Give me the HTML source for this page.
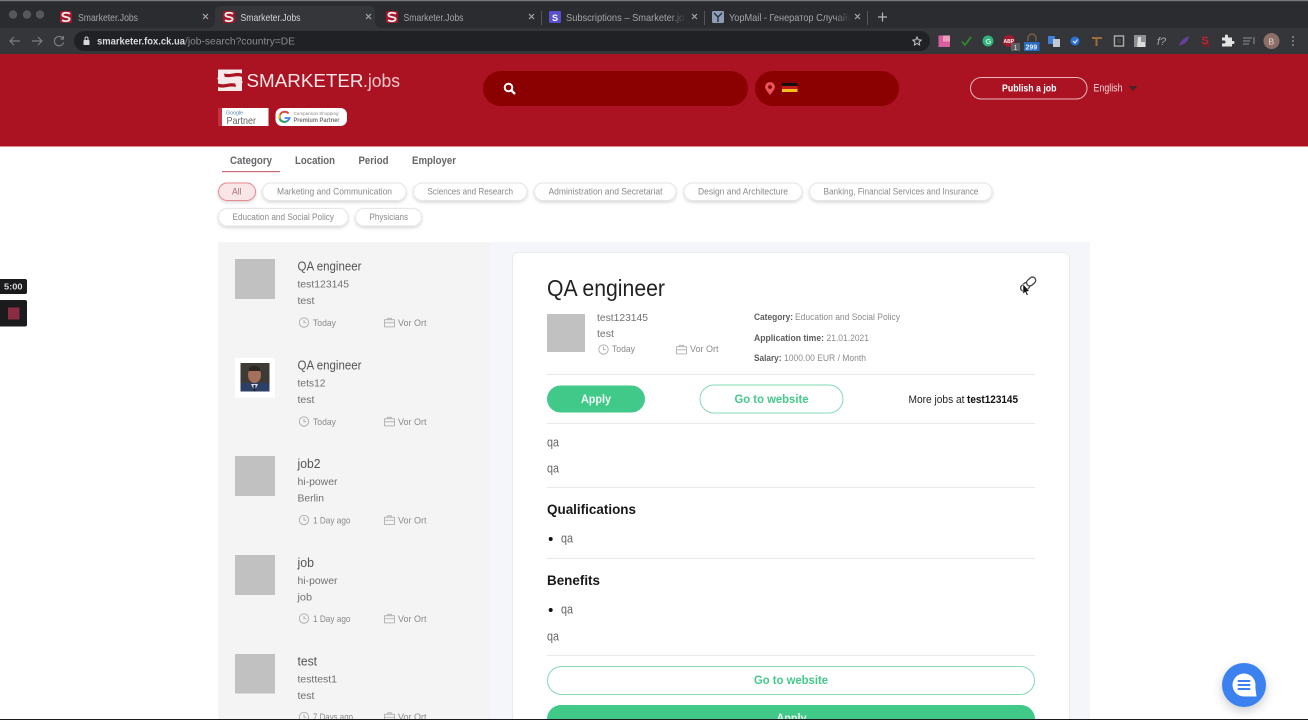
<!DOCTYPE html>
<html><head><meta charset="utf-8"><title>Smarketer.Jobs</title>
<style>
html,body{margin:0;padding:0;width:1308px;height:720px;overflow:hidden;background:#fff}
svg{display:block;filter:blur(.35px)}
text{font-family:"Liberation Sans",Arial,sans-serif;white-space:pre}
.tab{font-size:10.5px;fill:#a3a5a9}
.tabA{font-size:10.5px;fill:#d5d6d8}
.x{stroke:#a9abae;stroke-width:1.1;fill:none}
.chip{fill:#fff;stroke:#e6e6e6;stroke-width:1;filter:url(#cs)}
.ct{font-size:9.5px;fill:#8a8a8a}
.nav{font-size:11px;font-weight:bold;fill:#66666a}
.t1{font-size:12.5px;fill:#555}
.t2{font-size:10.5px;fill:#707070}
.m{font-size:9.5px;fill:#8a8a8a}
.hr{stroke:#e9e9e9;stroke-width:1}
.b{font-size:9.5px;font-weight:bold;fill:#5c5c5c}
.n{font-size:9.5px;fill:#8c8c8c}
.p{font-size:12.5px;fill:#666}
.h{font-size:14px;font-weight:bold;fill:#181818}
.g{font-size:12px;font-weight:bold;fill:#45c98b}
.ic{fill:none;stroke:#aaa;stroke-width:.9}
</style></head><body>
<svg width="1308" height="720" viewBox="0 0 1308 720" xmlns="http://www.w3.org/2000/svg">
<defs>
<filter id="cs" x="-10%" y="-30%" width="120%" height="180%"><feDropShadow dx="0" dy="1.5" stdDeviation="1.5" flood-color="#000" flood-opacity=".16"/></filter>
<filter id="ss" x="-40%" y="-40%" width="180%" height="180%"><feDropShadow dx="0" dy="4" stdDeviation="5" flood-color="#000" flood-opacity=".2"/></filter>
<linearGradient id="fd" x1="0" x2="1"><stop offset="0" stop-color="#2b2c2f" stop-opacity="0"/><stop offset="1" stop-color="#2b2c2f"/></linearGradient>
<symbol id="fav" viewBox="0 0 14 14" overflow="visible"><rect x="1" y="1" width="12" height="12" rx="2" fill="#a5162a"/><path d="M11 3.800C8 2 3.400 2.600 3.400 5 3.400 7.400 10.600 6.600 10.600 9 10.600 11.300 6 12 3 10.200" fill="none" stroke="#f4eeee" stroke-width="1.800"/></symbol>
<symbol id="clock" viewBox="0 0 11 11"><circle cx="5.500" cy="5.500" r="4.700" class="ic"/><path d="M5.500 2.800V5.700H7.800" class="ic"/></symbol>
<symbol id="brief" viewBox="0 0 12 11"><rect x=".6" y="2.500" width="10.800" height="7.800" class="ic"/><path d="M4 2.500V.9H8V2.500M.6 5.800H11.400" class="ic"/></symbol>
</defs>

<!-- browser chrome -->
<rect width="1308" height="54" fill="#2b2c2f"/>
<rect width="1308" height="1.200" fill="#77787a"/>
<rect x="0" y="28" width="1308" height="26" fill="#35363a"/>
<path d="M208 28Q215 28 215 21V12Q215 6 221 6H369Q375 6 375 12V21Q375 28 382 28Z" fill="#35363a"/>
<circle cx="13" cy="14.500" r="4.200" fill="#56575a"/><circle cx="27" cy="14.500" r="4.200" fill="#56575a"/><circle cx="40" cy="14.500" r="4.200" fill="#56575a"/>
<use href="#fav" x="59" y="10" width="14" height="14"/>
<text class="tab" x="78" y="21" textLength="60" lengthAdjust="spacingAndGlyphs">Smarketer.Jobs</text>
<path class="x" d="M203 14 208 19M208 14 203 19"/>
<use href="#fav" x="222" y="10" width="14" height="14"/>
<text class="tabA" x="240.500" y="21" textLength="60" lengthAdjust="spacingAndGlyphs">Smarketer.Jobs</text>
<path class="x" d="M366 14 371 19M371 14 366 19"/>
<use href="#fav" x="385" y="10" width="14" height="14"/>
<text class="tab" x="403.500" y="21" textLength="60" lengthAdjust="spacingAndGlyphs">Smarketer.Jobs</text>
<path class="x" d="M529 14 534 19M534 14 529 19"/>
<rect x="541" y="11" width="1" height="14" fill="#55565a"/>
<rect x="549" y="11" width="12" height="12" rx="1.500" fill="#5a4fcf"/><text x="552" y="21" font-size="9" font-weight="bold" fill="#fff">S</text>
<text class="tab" x="566" y="21" textLength="128" lengthAdjust="spacingAndGlyphs">Subscriptions – Smarketer.jobs</text>
<rect x="670" y="9" width="16" height="16" fill="url(#fd)"/><rect x="686" y="9" width="10" height="16" fill="#2b2c2f"/>
<path class="x" d="M692 14 697 19M697 14 692 19"/>
<rect x="704" y="11" width="1" height="14" fill="#55565a"/>
<rect x="712" y="11" width="12" height="12" rx="1.500" fill="#8f9db5"/><path d="M714 13 718 17 722 13M718 17V22" stroke="#22304a" stroke-width="1.400" fill="none"/>
<text class="tab" x="729" y="21" textLength="135" lengthAdjust="spacingAndGlyphs">YopMail - Генератор Случайных</text>
<rect x="834" y="9" width="16" height="16" fill="url(#fd)"/><rect x="850" y="9" width="16" height="16" fill="#2b2c2f"/>
<path class="x" d="M855 14 860 19M860 14 855 19"/>
<rect x="867" y="11" width="1" height="14" fill="#55565a"/>
<path d="M882.500 12.500V21.500M878 17H887" stroke="#b4b5b7" stroke-width="1.200"/>

<path d="M20 41H10M14 37 10 41 14 45" fill="none" stroke="#7d7e81" stroke-width="1.200"/>
<path d="M32 41H42M38 37 42 41 38 45" fill="none" stroke="#7d7e81" stroke-width="1.200"/>
<path d="M63 38.500A4.700 4.700 0 1 0 63.600 42.500M63.400 36V39H60.400" fill="none" stroke="#7d7e81" stroke-width="1.200"/>
<rect x="74" y="31" width="856" height="20" rx="10" fill="#202124"/>
<rect x="83.500" y="40" width="6" height="5" rx=".8" fill="#d8d8d8"/><path d="M85 40V38.500A1.500 1.500 0 0 1 88 38.500V40" fill="none" stroke="#d8d8d8"/>
<text x="97" y="44.500" font-size="10.500" font-weight="bold" fill="#d9dadb" textLength="88" lengthAdjust="spacingAndGlyphs">smarketer.fox.ck.ua</text>
<text x="185" y="44.500" font-size="10.500" fill="#8a8b8e" textLength="110" lengthAdjust="spacingAndGlyphs">/job-search?country=DE</text>
<path d="M917 37 918.200 39.800 921.200 40.100 919 42.100 919.600 45 917 43.500 914.400 45 915 42.100 912.800 40.100 915.800 39.800Z" fill="none" stroke="#c4c4c4" stroke-width="1"/>

<!-- extensions -->
<rect x="938.500" y="35.500" width="11.500" height="11.500" fill="#d9609e"/><rect x="943" y="35.500" width="7" height="6" fill="#ee9cc0"/>
<path d="M962 41.500 965 45 971 37" fill="none" stroke="#2f7f2b" stroke-width="2"/>
<circle cx="988" cy="41" r="5.500" fill="#2fb27c"/><text x="985.500" y="44" font-size="7.500" font-weight="bold" fill="#c9f0df">G</text>
<circle cx="1009" cy="41" r="6" fill="#a4192d"/><text x="1003.500" y="43" font-size="5" font-weight="bold" fill="#fff">ABP</text>
<rect x="1011" y="43" width="9" height="8" fill="#5e5f62"/><text x="1013.500" y="50" font-size="7" fill="#ddd">1</text>
<path d="M1028 41V38A4 4 0 0 1 1036 38V41" fill="none" stroke="#7a5c40" stroke-width="1.500"/>
<rect x="1024" y="42" width="15.500" height="9" fill="#2a6cc4"/><text x="1025.500" y="49.500" font-size="7" font-weight="bold" fill="#e5effa">299</text>
<rect x="1048" y="36" width="7" height="8" fill="#3f7fd8"/><rect x="1053" y="39" width="7" height="8" fill="#c5cad2"/>
<circle cx="1075" cy="41" r="4.500" fill="#2a72d8"/><path d="M1073 41 1075 43 1077.500 39.500" stroke="#fff" fill="none"/>
<path d="M1092 38H1102M1096.500 38V46" fill="none" stroke="#a06c38" stroke-width="2"/>
<rect x="1114.500" y="36" width="9" height="10" fill="#2a2a2c" stroke="#a8a8a8" stroke-width="1.500"/><rect x="1116.800" y="38.300" width="4.400" height="5.400" fill="#444"/>
<rect x="1134" y="35" width="12" height="12" fill="#8f9093"/><path d="M1138 37H1141V42H1145V47H1137Z" fill="#dcdcdd"/>
<text x="1157" y="45" font-size="11" font-style="italic" font-family="Liberation Serif" fill="#a8a8a8">f?</text>
<path d="M1179 46Q1181 39 1189 36 1188 43 1181 45Z" fill="#6a3f9c"/>
<text x="1201.500" y="44" font-size="11" font-weight="bold" fill="#c8202f">S</text><rect x="1203" y="44" width="7" height="3" fill="#6b2229"/>
<path d="M1222 38H1225V36.500A1.500 1.500 0 0 1 1228 36.500V38H1232V41.500H1233A1.500 1.500 0 0 1 1233 44.500H1232V47H1222V44H1224A1.500 1.500 0 0 0 1224 41H1222Z" fill="#e3e3e3" transform="translate(0,-.5)"/>
<path d="M1243 38H1252M1243 41H1250M1243 44H1249M1254 37V44" stroke="#7f8083" stroke-width="1.200" fill="none"/>
<circle cx="1271.500" cy="41" r="8" fill="#8e6f68"/><text x="1268.500" y="44.500" font-size="8.500" fill="#e6d9d5">B</text>
<circle cx="1293" cy="37" r="1" fill="#8f9092"/><circle cx="1293" cy="41" r="1" fill="#8f9092"/><circle cx="1293" cy="45" r="1" fill="#8f9092"/>

<!-- red header -->
<rect y="54" width="1308" height="92.500" fill="#ab1323"/>
<rect y="146" width="1308" height="1" fill="#d98a92"/>
<rect x="218" y="69.500" width="24" height="21.500" fill="#f6e9e9"/>
<path d="M242.500 75.500C236 72.500 231 77.500 224 75" fill="none" stroke="#ab1323" stroke-width="3.200"/>
<path d="M217.500 85C224 88 229 83 236 85.500" fill="none" stroke="#ab1323" stroke-width="3.200"/>
<path d="M218 79.500 224 75M242 81 236 85.500" stroke="#f6e9e9" stroke-width="3"/>
<text x="246.500" y="87" font-size="18.500" fill="#f6e8e9" textLength="117" lengthAdjust="spacingAndGlyphs">SMARKETER</text>
<text x="363" y="87" font-size="18.500" fill="#eec8cc" textLength="37" lengthAdjust="spacingAndGlyphs">.jobs</text>
<rect x="218" y="108" width="50.500" height="18" fill="#fff"/><rect x="218" y="108" width="4" height="18" fill="#c8303f"/>
<text x="226" y="114.500" font-size="5.500" fill="#5a7fc0" textLength="17" lengthAdjust="spacingAndGlyphs">Google</text>
<text x="226.500" y="124" font-size="10.500" fill="#666" textLength="29.500" lengthAdjust="spacingAndGlyphs">Partner</text>
<rect x="275.500" y="108" width="71.500" height="18" rx="6.500" fill="#fff"/>
<path d="M288.500 113.500A5 5 0 1 0 289.500 118H284.500" fill="none" stroke="#4285f4" stroke-width="1.800"/>
<path d="M280.200 114.500A5 5 0 0 1 288.500 113.500" fill="none" stroke="#ea4335" stroke-width="1.800"/>
<path d="M279.500 118.500A5 5 0 0 0 287 121.300" fill="none" stroke="#34a853" stroke-width="1.800"/>
<path d="M279.800 114.500A5 5 0 0 0 279.500 118.500" fill="none" stroke="#fbbc05" stroke-width="1.800"/>
<text x="293.500" y="115" font-size="4.500" fill="#888" textLength="45" lengthAdjust="spacingAndGlyphs">Comparison Shopping</text>
<text x="293.500" y="122" font-size="6" font-weight="bold" fill="#777" textLength="46" lengthAdjust="spacingAndGlyphs">Premium Partner</text>

<rect x="483" y="71" width="265" height="35" rx="17.500" fill="#8b0000"/>
<circle cx="508.500" cy="87.500" r="3.800" fill="none" stroke="#fff" stroke-width="2"/><path d="M511.500 90.500 515 94" stroke="#fff" stroke-width="2.300"/>
<rect x="755" y="71" width="144" height="35" rx="17.500" fill="#8b0000"/>
<path d="M770 95Q765 89 765 87A5 5 0 0 1 775 87Q775 89 770 95Z" fill="#e8545a"/><circle cx="770" cy="87" r="1.900" fill="#8b0000"/>
<rect x="782" y="83" width="15.500" height="3" fill="#111"/><rect x="782" y="86" width="15.500" height="3" fill="#c41a1a"/><rect x="782" y="89" width="15.500" height="3" fill="#f2c11d"/>
<rect x="970.500" y="77.500" width="116.500" height="21.500" rx="10.700" fill="none" stroke="#e9b8bc" stroke-width="1"/>
<text x="1002" y="91.500" font-size="10.500" font-weight="bold" fill="#fff" textLength="54.500" lengthAdjust="spacingAndGlyphs">Publish a job</text>
<text x="1093.500" y="91.500" font-size="11" fill="#edd5d7" textLength="29" lengthAdjust="spacingAndGlyphs">English</text>
<path d="M1128.500 86H1137.500L1133 91Z" fill="#4a2226"/>

<!-- filter tabs -->
<text class="nav" x="230" y="164" textLength="42" lengthAdjust="spacingAndGlyphs">Category</text>
<text class="nav" x="295" y="164" textLength="40" lengthAdjust="spacingAndGlyphs">Location</text>
<text class="nav" x="358.500" y="164" textLength="30" lengthAdjust="spacingAndGlyphs">Period</text>
<text class="nav" x="412" y="164" textLength="44" lengthAdjust="spacingAndGlyphs">Employer</text>
<rect x="222" y="171" width="58" height="1.200" fill="#c76a77"/>

<!-- chips -->
<rect x="218.500" y="183" width="37" height="17.500" rx="8.700" fill="#fbe6e7" stroke="#e98791" filter="url(#cs)"/>
<text x="232" y="194.500" font-size="9.500" fill="#9b7074" textLength="9.500" lengthAdjust="spacingAndGlyphs">All</text>
<rect class="chip" x="262.500" y="183" width="143.500" height="17.500" rx="8.700"/><text class="ct" x="277" y="194.500" textLength="115" lengthAdjust="spacingAndGlyphs">Marketing and Communication</text>
<rect class="chip" x="413.500" y="183" width="113.500" height="17.500" rx="8.700"/><text class="ct" x="427.500" y="194.500" textLength="85.500" lengthAdjust="spacingAndGlyphs">Sciences and Research</text>
<rect class="chip" x="534.500" y="183" width="141.500" height="17.500" rx="8.700"/><text class="ct" x="548.500" y="194.500" textLength="114" lengthAdjust="spacingAndGlyphs">Administration and Secretariat</text>
<rect class="chip" x="684" y="183" width="118" height="17.500" rx="8.700"/><text class="ct" x="698" y="194.500" textLength="90" lengthAdjust="spacingAndGlyphs">Design and Architecture</text>
<rect class="chip" x="809.500" y="183" width="182.500" height="17.500" rx="8.700"/><text class="ct" x="823.500" y="194.500" textLength="155" lengthAdjust="spacingAndGlyphs">Banking, Financial Services and Insurance</text>
<rect class="chip" x="218.500" y="208.500" width="129.500" height="17.500" rx="8.700"/><text class="ct" x="232.500" y="220" textLength="101.500" lengthAdjust="spacingAndGlyphs">Education and Social Policy</text>
<rect class="chip" x="355.500" y="208.500" width="66" height="17.500" rx="8.700"/><text class="ct" x="369.500" y="220" textLength="38.500" lengthAdjust="spacingAndGlyphs">Physicians</text>

<!-- panel -->
<rect x="218" y="242" width="872" height="478" fill="#f5f6fa"/>
<rect x="218" y="242" width="272" height="478" fill="#f4f4f5"/>

<!-- job list -->
<rect x="235" y="259" width="40" height="40" fill="#c1c1c1"/>
<text class="t1" x="297.500" y="270.500" textLength="64" lengthAdjust="spacingAndGlyphs">QA engineer</text>
<text class="t2" x="297.500" y="287.500" textLength="51.500" lengthAdjust="spacingAndGlyphs">test123145</text>
<text class="t2" x="297.500" y="304" textLength="17" lengthAdjust="spacingAndGlyphs">test</text>
<use href="#clock" x="298.500" y="317" width="11" height="11"/><text class="m" x="313" y="326" textLength="23" lengthAdjust="spacingAndGlyphs">Today</text>
<use href="#brief" x="384" y="317" width="11" height="11"/><text class="m" x="398" y="326" textLength="28.500" lengthAdjust="spacingAndGlyphs">Vor Ort</text>

<rect x="235" y="358" width="40" height="39.500" fill="#fff"/>
<rect x="240.500" y="363" width="29" height="28.500" fill="#3e3a36"/><rect x="240.500" y="383" width="29" height="8.500" fill="#2c3f66"/>
<ellipse cx="254.500" cy="375" rx="6.500" ry="8" fill="#a3705c"/><path d="M249 368Q254.500 363 260 368V371H249Z" fill="#2c2623"/><path d="M251 384H258L254.500 391Z" fill="#d8dde6"/><rect x="253.500" y="385" width="2" height="6.500" fill="#1c2438"/>
<text class="t1" x="297.500" y="369.500" textLength="64" lengthAdjust="spacingAndGlyphs">QA engineer</text>
<text class="t2" x="297.500" y="386.500" textLength="28" lengthAdjust="spacingAndGlyphs">tets12</text>
<text class="t2" x="297.500" y="403" textLength="17" lengthAdjust="spacingAndGlyphs">test</text>
<use href="#clock" x="298.500" y="416" width="11" height="11"/><text class="m" x="313" y="425" textLength="23" lengthAdjust="spacingAndGlyphs">Today</text>
<use href="#brief" x="384" y="416" width="11" height="11"/><text class="m" x="398" y="425" textLength="28.500" lengthAdjust="spacingAndGlyphs">Vor Ort</text>

<rect x="235" y="456" width="40" height="40" fill="#c1c1c1"/>
<text class="t1" x="297.500" y="468" textLength="23" lengthAdjust="spacingAndGlyphs">job2</text>
<text class="t2" x="297.500" y="485" textLength="40" lengthAdjust="spacingAndGlyphs">hi-power</text>
<text class="t2" x="297.500" y="501.500" textLength="26.500" lengthAdjust="spacingAndGlyphs">Berlin</text>
<use href="#clock" x="298.500" y="514.500" width="11" height="11"/><text class="m" x="313" y="523.500" textLength="37.500" lengthAdjust="spacingAndGlyphs">1 Day ago</text>
<use href="#brief" x="384" y="514.500" width="11" height="11"/><text class="m" x="398" y="523.500" textLength="28.500" lengthAdjust="spacingAndGlyphs">Vor Ort</text>

<rect x="235" y="555" width="40" height="40" fill="#c1c1c1"/>
<text class="t1" x="297.500" y="567" textLength="16.500" lengthAdjust="spacingAndGlyphs">job</text>
<text class="t2" x="297.500" y="584" textLength="40" lengthAdjust="spacingAndGlyphs">hi-power</text>
<text class="t2" x="297.500" y="600.500" textLength="14.500" lengthAdjust="spacingAndGlyphs">job</text>
<use href="#clock" x="298.500" y="613" width="11" height="11"/><text class="m" x="313" y="622" textLength="37.500" lengthAdjust="spacingAndGlyphs">1 Day ago</text>
<use href="#brief" x="384" y="613" width="11" height="11"/><text class="m" x="398" y="622" textLength="28.500" lengthAdjust="spacingAndGlyphs">Vor Ort</text>

<rect x="235" y="654" width="40" height="39.500" fill="#c1c1c1"/>
<text class="t1" x="297.500" y="665.500" textLength="19.500" lengthAdjust="spacingAndGlyphs">test</text>
<text class="t2" x="297.500" y="682.500" textLength="39.500" lengthAdjust="spacingAndGlyphs">testtest1</text>
<text class="t2" x="297.500" y="699" textLength="17" lengthAdjust="spacingAndGlyphs">test</text>
<use href="#clock" x="298.500" y="711.500" width="11" height="11"/><text class="m" x="313" y="720" textLength="40" lengthAdjust="spacingAndGlyphs">7 Days ago</text>
<use href="#brief" x="384" y="711.500" width="11" height="11"/><text class="m" x="398" y="720" textLength="28.500" lengthAdjust="spacingAndGlyphs">Vor Ort</text>

<!-- detail card -->
<rect x="512.500" y="252.500" width="557" height="480" rx="6" fill="#fff" stroke="#e9ebef"/>
<text x="547" y="296" font-size="23" fill="#222" textLength="118" lengthAdjust="spacingAndGlyphs">QA engineer</text>
<g transform="rotate(-42 1028 284)" fill="#fff" stroke="#444" stroke-width="1.300"><rect x="1019" y="281" width="10" height="6.500" rx="3.200"/><rect x="1027" y="281" width="10" height="6.500" rx="3.200"/></g>
<path d="M1023 284V294L1025.200 292 1026.800 295.500 1028.200 294.800 1026.600 291.500 1029.500 291.300Z" fill="#111" stroke="#fff" stroke-width=".5"/>
<rect x="547" y="314" width="38" height="38" fill="#c1c1c1"/>
<text class="t2" x="597" y="321" textLength="51" lengthAdjust="spacingAndGlyphs">test123145</text>
<text class="t2" x="597" y="337" textLength="17" lengthAdjust="spacingAndGlyphs">test</text>
<use href="#clock" x="598" y="344" width="11" height="11"/><text class="m" x="612" y="352" textLength="23" lengthAdjust="spacingAndGlyphs">Today</text>
<use href="#brief" x="676" y="344" width="11" height="11"/><text class="m" x="690" y="352" textLength="28.500" lengthAdjust="spacingAndGlyphs">Vor Ort</text>
<text class="b" x="754" y="320" textLength="39" lengthAdjust="spacingAndGlyphs">Category:</text>
<text class="n" x="795" y="320" textLength="105" lengthAdjust="spacingAndGlyphs">Education and Social Policy</text>
<text class="b" x="754" y="341" textLength="70" lengthAdjust="spacingAndGlyphs">Application time:</text>
<text class="n" x="826.500" y="341" textLength="42.500" lengthAdjust="spacingAndGlyphs">21.01.2021</text>
<text class="b" x="754" y="361" textLength="27.500" lengthAdjust="spacingAndGlyphs">Salary:</text>
<text class="n" x="784" y="361" textLength="82" lengthAdjust="spacingAndGlyphs">1000.00 EUR / Month</text>
<line class="hr" x1="547" x2="1035" y1="374.500" y2="374.500"/>
<rect x="547" y="385.500" width="98" height="27" rx="13.500" fill="#41c98a"/>
<text x="581" y="403" font-size="12" font-weight="bold" fill="#f2fbf7" textLength="30" lengthAdjust="spacingAndGlyphs">Apply</text>
<rect x="700" y="385" width="143" height="28" rx="14" fill="#fff" stroke="#86dab6"/>
<text class="g" x="734.500" y="403" textLength="74" lengthAdjust="spacingAndGlyphs">Go to website</text>
<text x="908.500" y="403" font-size="11" fill="#222" textLength="56" lengthAdjust="spacingAndGlyphs">More jobs at</text>
<text x="967" y="403" font-size="11" font-weight="bold" fill="#111" textLength="51" lengthAdjust="spacingAndGlyphs">test123145</text>
<line class="hr" x1="547" x2="1035" y1="423.500" y2="423.500"/>
<text class="p" x="547" y="446.500" textLength="12" lengthAdjust="spacingAndGlyphs">qa</text>
<text class="p" x="547" y="472.500" textLength="12" lengthAdjust="spacingAndGlyphs">qa</text>
<line class="hr" x1="547" x2="1035" y1="487.500" y2="487.500"/>
<text class="h" x="547" y="514" textLength="89" lengthAdjust="spacingAndGlyphs">Qualifications</text>
<circle cx="550.700" cy="539" r="2" fill="#111"/>
<text class="p" x="561" y="542.500" textLength="12" lengthAdjust="spacingAndGlyphs">qa</text>
<line class="hr" x1="547" x2="1035" y1="558.500" y2="558.500"/>
<text class="h" x="547" y="585" textLength="53" lengthAdjust="spacingAndGlyphs">Benefits</text>
<circle cx="550.700" cy="610" r="2" fill="#111"/>
<text class="p" x="561" y="613.500" textLength="12" lengthAdjust="spacingAndGlyphs">qa</text>
<text class="p" x="547" y="640.500" textLength="12" lengthAdjust="spacingAndGlyphs">qa</text>
<line class="hr" x1="547" x2="1035" y1="655.500" y2="655.500"/>
<rect x="547.500" y="666.500" width="487" height="28" rx="14" fill="#fff" stroke="#86dab6"/>
<text class="g" x="754" y="684" textLength="74" lengthAdjust="spacingAndGlyphs">Go to website</text>
<rect x="547" y="705" width="488" height="30" rx="14" fill="#41c98a"/>
<text x="776.500" y="722" font-size="12" font-weight="bold" fill="#e6f7ef" textLength="30" lengthAdjust="spacingAndGlyphs">Apply</text>

<!-- overlays -->
<rect x="-4" y="279" width="31" height="15" rx="2" fill="#1b1b1d"/>
<text x="4" y="289.500" font-size="8" font-weight="bold" font-family="Liberation Mono" fill="#dcdcdc" textLength="18.500" lengthAdjust="spacingAndGlyphs">5:00</text>
<rect x="-4" y="300" width="31" height="26.500" rx="2" fill="#1b1b1d"/>
<rect x="8" y="307.500" width="11.500" height="12" fill="#8a2c42"/>
<circle cx="1244" cy="685" r="22" fill="#3b82f0" filter="url(#ss)"/>
<circle cx="1244" cy="685" r="11.500" fill="#fff"/>
<path d="M1244 696.500H1256.500L1255 685Z" fill="#fff"/>
<rect x="1237.500" y="680" width="13" height="2" rx="1" fill="#3b82f0"/><rect x="1237.500" y="684" width="13" height="2" rx="1" fill="#3b82f0"/><rect x="1237.500" y="688" width="13" height="2" rx="1" fill="#3b82f0"/>
<rect y="719" width="1308" height="1" fill="#1a1a1a"/>
</svg>
</body></html>
